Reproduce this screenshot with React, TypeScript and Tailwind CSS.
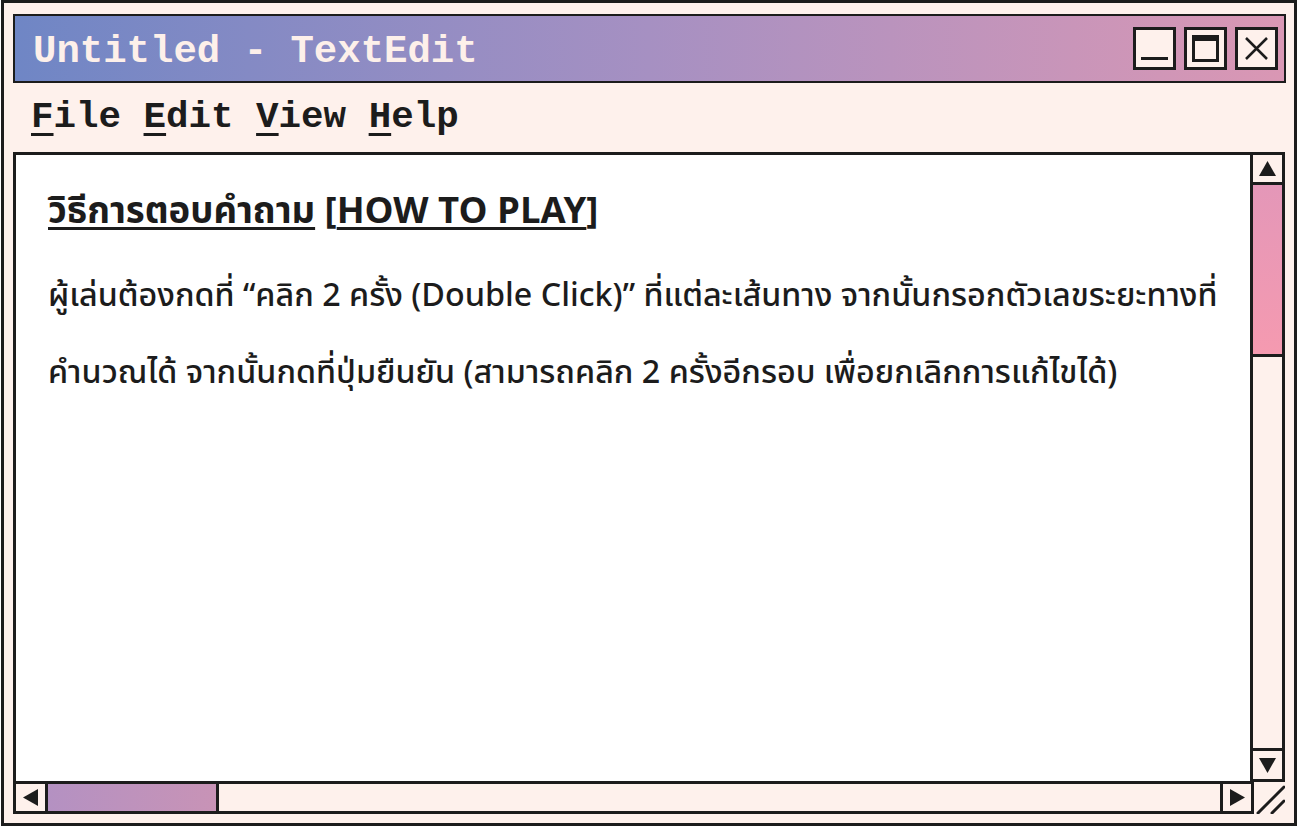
import React from 'react';

const mono = { fontFamily: '"Liberation Mono", "Courier New", monospace' };
const thai = { fontFamily: '"Noto Sans Thai", "Noto Sans", "DejaVu Sans", sans-serif' };

function Tri({ dir }: { dir: 'up' | 'down' | 'left' | 'right' }) {
  const pts = {
    up: '8.5,0 17,15 0,15',
    down: '0,0 17,0 8.5,15',
    left: '15,0 15,17 0,8.5',
    right: '0,0 15,8.5 0,17',
  }[dir];
  const w = dir === 'up' || dir === 'down' ? 17 : 15;
  const h = dir === 'up' || dir === 'down' ? 15 : 17;
  return (
    <svg width={w} height={h} viewBox={`0 0 ${w} ${h}`}>
      <polygon points={pts} fill="#1c1c1c" />
    </svg>
  );
}

function TitleButton({ children }: { children: React.ReactNode }) {
  return (
    <div className="w-[43px] h-[43px] border-[3px] border-[#1c1c1c] bg-[#fef1ec] flex items-center justify-center">
      {children}
    </div>
  );
}

function MenuItem({ label }: { label: string }) {
  return (
    <span>
      <span className="underline decoration-[3px] underline-offset-[6px]">{label[0]}</span>
      {label.slice(1)}
    </span>
  );
}

export default function App() {
  return (
    <div className="w-[1299px] h-[829px] bg-white">
      <div className="ml-[1px] w-[1296px] h-[826px] border-[3px] border-[#1c1c1c] bg-[#fef1ec] flex flex-col pt-[11px] pl-[9px] pr-[9px] pb-[8px]">
        {/* title bar */}
        <div className="h-[69px] mr-[-1px] border-2 border-[#1c1c1c] bg-gradient-to-r from-[#6f86c5] via-[#a690c2] to-[#da97b4] flex items-center pl-[18px] pr-[6px]">
          <div className="flex-1 text-[39px] font-bold text-[#fdf0ea] leading-none pt-[8px]" style={mono}>
            Untitled - TextEdit
          </div>
          <div className="flex gap-[8px]">
            <TitleButton>
              <div className="w-[27px] h-[3px] bg-[#1c1c1c] mt-[20px]" />
            </TitleButton>
            <TitleButton>
              <div className="w-[27px] h-[27px] border-[3px] border-t-[6px] border-[#1c1c1c]" />
            </TitleButton>
            <TitleButton>
              <svg width="25" height="25" viewBox="0 0 25 25">
                <path d="M2 2 L23 23 M23 2 L2 23" stroke="#1c1c1c" strokeWidth="2.5" />
              </svg>
            </TitleButton>
          </div>
        </div>

        {/* menu */}
        <div className="h-[69px] flex items-center pl-[18px] text-[37.5px] font-bold text-[#1c1c1c] leading-none" style={mono}>
          <div className="whitespace-pre">
            <MenuItem label="File" />{' '}
            <MenuItem label="Edit" />{' '}
            <MenuItem label="View" />{' '}
            <MenuItem label="Help" />
          </div>
        </div>

        {/* document */}
        <div className="flex-1 flex flex-col">
          <div className="flex h-[630px]">
            <div className="flex-1 bg-white border-l-[3px] border-t-[3px] border-[#1c1c1c] pl-[32px] pt-[35px] text-[#1c1c1c]" style={thai}>
              <h1 className="text-[36.5px] font-bold leading-[44px]">
                <span className="underline decoration-[3px] underline-offset-[4px]">วิธีการตอบคำถาม</span> [<span className="underline decoration-[3px] underline-offset-[4px]">HOW TO PLAY</span>]
              </h1>
              <p className="mt-[24px] text-[32.3px] font-medium leading-[77px] whitespace-nowrap">
                ผู้เล่นต้องกดที่ “คลิก 2 ครั้ง (Double Click)” ที่แต่ละเส้นทาง จากนั้นกรอกตัวเลขระยะทางที่
                <br />
                คำนวณได้ จากนั้นกดที่ปุ่มยืนยัน (สามารถคลิก 2 ครั้งอีกรอบ เพื่อยกเลิกการแก้ไขได้)
              </p>
            </div>
            <div className="w-[35px] border-[3px] border-[#1c1c1c] bg-[#fef1ec] flex flex-col">
              <div className="h-[30px] border-b-[3px] border-[#1c1c1c] flex items-center justify-center">
                <Tri dir="up" />
              </div>
              <div className="h-[172px] border-b-[3px] border-[#1c1c1c] bg-gradient-to-b from-[#e497b8] to-[#f59ab0]" />
              <div className="flex-1" />
              <div className="h-[31px] border-t-[3px] border-[#1c1c1c] flex items-center justify-center">
                <Tri dir="down" />
              </div>
            </div>
          </div>
          <div className="flex h-[33px] -mt-[1px]">
            <div className="flex-1 border-[3px] border-[#1c1c1c] bg-[#fef1ec] flex mr-[-2px]">
              <div className="w-[32px] border-r-[3px] border-[#1c1c1c] flex items-center justify-center">
                <Tri dir="left" />
              </div>
              <div className="w-[171px] border-r-[3px] border-[#1c1c1c] bg-gradient-to-r from-[#b491c2] to-[#c893b6]" />
              <div className="flex-1" />
              <div className="w-[31px] border-l-[3px] border-[#1c1c1c] flex items-center justify-center">
                <Tri dir="right" />
              </div>
            </div>
            <div className="w-[33px] flex items-end justify-end">
              <svg width="33" height="33" viewBox="0 0 33 33">
                <path d="M6 32 L32 6 M20 32 L32 20" stroke="#1c1c1c" strokeWidth="3" strokeLinecap="round" />
              </svg>
            </div>
          </div>
        </div>
      </div>
    </div>
  );
}
